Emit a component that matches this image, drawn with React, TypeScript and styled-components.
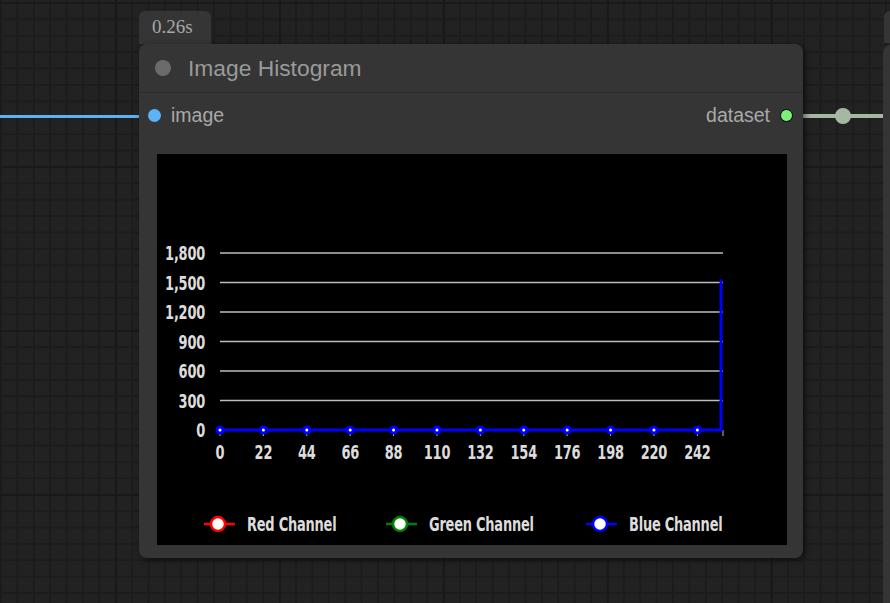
import React from 'react';
import styled, { createGlobalStyle } from 'styled-components';

const GlobalStyle = createGlobalStyle`
    html, body {
        margin: 0;
        padding: 0;
        background: #222;
        overflow: hidden;
    }
`

const yTicks = [0, 300, 600, 900, 1200, 1500, 1800];
const xTicks = [0, 22, 44, 66, 88, 110, 132, 154, 176, 198, 220, 242];

// chart geometry, in px inside the black preview box
const X0 = 63;
const X1 = 566;
const Y0 = 276;
const PER_UNIT_Y = 29.5 / 300;
const PER_UNIT_X = (X1 - X0) / 255;
const NARROW = 0.76;

const xPos = (v: number) => X0 + v * PER_UNIT_X;
const yPos = (v: number) => Y0 - v * PER_UNIT_Y;

const legend = [
    { label: 'Red Channel', color: '#ff0000', x: 47 },
    { label: 'Green Channel', color: '#008000', x: 229 },
    { label: 'Blue Channel', color: '#0000ff', x: 429 },
];

type LabelProps = {
    x: number;
    y: number;
    anchor?: 'start' | 'middle' | 'end';
    children: React.ReactNode;
}

// condensed label: the font is squeezed horizontally round its anchor
const Label: React.FunctionComponent<LabelProps> = ({ x, y, anchor = 'start', children }: LabelProps) => (
    <AxisText transform={`translate(${x} ${y}) scale(${NARROW} 1)`} textAnchor={anchor}>
        {children}
    </AxisText>
)

const Histogram: React.FunctionComponent = () => {
    const peakX = xPos(254);
    return (
        <ChartSvg width={630} height={391} viewBox='0 0 630 391'>
            {yTicks.map((t) => (
                <g key={t}>
                    {t > 0 && (
                        <line x1={X0} x2={X1} y1={yPos(t)} y2={yPos(t)} stroke='#bdbdbd' strokeWidth={1.5} />
                    )}
                    <Label x={48} y={yPos(t) + 7} anchor='end'>
                        {t.toLocaleString('en-US')}
                    </Label>
                </g>
            ))}
            {xTicks.map((t) => (
                <g key={t}>
                    <line x1={xPos(t)} x2={xPos(t)} y1={Y0} y2={Y0 + 6} stroke='#bdbdbd' strokeWidth={1} />
                    <Label x={xPos(t)} y={Y0 + 29} anchor='middle'>{t}</Label>
                </g>
            ))}
            <line x1={X1} x2={X1} y1={Y0} y2={Y0 + 6} stroke='#bdbdbd' strokeWidth={1} />
            <polyline
                points={`${X0},${Y0} ${peakX},${Y0} ${peakX},${yPos(1530)}`}
                fill='none'
                stroke='#0000ff'
                strokeWidth={3}
            />
            {xTicks.map((t) => (
                <g key={'p' + t}>
                    <circle cx={xPos(t)} cy={Y0} r={4.5} fill='#0000ff' />
                    <circle cx={xPos(t)} cy={Y0} r={1.5} fill='#ffffff' />
                </g>
            ))}
            {legend.map((l) => (
                <g key={l.label}>
                    <line x1={l.x} x2={l.x + 31} y1={370} y2={370} stroke={l.color} strokeWidth={2.5} />
                    <circle cx={l.x + 14} cy={370} r={7} fill='#ffffff' stroke={l.color} strokeWidth={2.5} />
                    <Label x={l.x + 43} y={377}>{l.label}</Label>
                </g>
            ))}
        </ChartSvg>
    )
}

const App: React.FunctionComponent = () => {
    return (
        <Canvas>
            <GlobalStyle />
            <Link $left={0} $width={140} $color='#5fb2f2' $thick={3} />
            <Link $left={803} $width={81} $color='#a6b8a4' $thick={4} />
            <LinkKnot />

            <NeighbourBadge />
            <NeighbourNode />

            <TimeBadge>0.26s</TimeBadge>
            <Node>
                <TitleBar>
                    <TitleDot />
                    <Title>Image Histogram</Title>
                </TitleBar>
                <SlotRow>
                    <Slot>
                        <SlotDot $color='#5cb3f7' />
                        <SlotLabel>image</SlotLabel>
                    </Slot>
                    <Slot>
                        <SlotLabel>dataset</SlotLabel>
                        <SlotDot $color='#7af07a' $outlined />
                    </Slot>
                </SlotRow>
                <Preview>
                    <Histogram />
                </Preview>
            </Node>
        </Canvas>
    )
}

const Canvas = styled.div`
    position: relative;
    width: 890px;
    height: 603px;
    overflow: hidden;
    background-color: #222;
    background-image:
        linear-gradient(to right, #191919 2px, transparent 2px),
        linear-gradient(to bottom, #191919 2px, transparent 2px),
        linear-gradient(to right, #1c1c1c 1.5px, transparent 1.5px),
        linear-gradient(to bottom, #1c1c1c 1.5px, transparent 1.5px);
    background-size: 164px 164px, 164px 164px, 16.4px 16.4px, 16.4px 16.4px;
    background-position: 115px 2px, 115px 2px, 0 2px, 0 2px;
    font-family: Arial, "Liberation Sans", sans-serif;
`

const Link = styled.div<{ $left: number; $width: number; $color: string; $thick: number }>`
    position: absolute;
    top: ${(p) => 116 - p.$thick / 2}px;
    left: ${(p) => p.$left}px;
    width: ${(p) => p.$width}px;
    height: ${(p) => p.$thick}px;
    background: ${(p) => p.$color};
`

const LinkKnot = styled.div`
    position: absolute;
    left: 835px;
    top: 108px;
    width: 16px;
    height: 16px;
    border-radius: 50%;
    background: #a6b8a4;
`

const NeighbourBadge = styled.div`
    position: absolute;
    left: 884px;
    top: 11px;
    width: 40px;
    height: 32px;
    border-radius: 6px 6px 0 0;
    background: #353535;
`

const NeighbourNode = styled.div`
    position: absolute;
    left: 883px;
    top: 45px;
    width: 40px;
    height: 600px;
    border-radius: 8px 0 0 0;
    background: #353535;
`

const TimeBadge = styled.div`
    position: absolute;
    left: 139px;
    top: 11px;
    width: 72px;
    height: 33px;
    box-sizing: border-box;
    padding: 5px 0 0 13px;
    border-radius: 6px 6px 0 0;
    background: #353535;
    color: #a8a8a8;
    font-family: "Liberation Serif", "Times New Roman", serif;
    font-size: 19px;
`

const Node = styled.div`
    position: absolute;
    left: 139px;
    top: 44px;
    width: 664px;
    height: 514px;
    display: flex;
    flex-direction: column;
    border-radius: 8px;
    background: #353535;
    box-shadow: 2px 2px 6px rgba(0, 0, 0, 0.55);
`

const TitleBar = styled.div`
    height: 49px;
    display: flex;
    align-items: center;
    gap: 17px;
    padding-left: 16px;
    border-bottom: 1px solid #2c2c2c;
    box-sizing: border-box;
`

const TitleDot = styled.div`
    width: 16px;
    height: 16px;
    border-radius: 50%;
    background: #6b6b6b;
`

const Title = styled.div`
    color: #9a9a9a;
    font-size: 22.8px;
    padding-top: 1px;
`

const SlotRow = styled.div`
    height: 45px;
    display: flex;
    justify-content: space-between;
    align-items: center;
    padding: 0 10px 2px 9px;
`

const Slot = styled.div`
    display: flex;
    align-items: center;
    gap: 10px;
`

const SlotDot = styled.div<{ $color: string; $outlined?: boolean }>`
    width: 13px;
    height: 13px;
    box-sizing: border-box;
    border-radius: 50%;
    background: ${(p) => p.$color};
    border: ${(p) => (p.$outlined ? '1px solid #000' : 'none')};
`

const SlotLabel = styled.div`
    color: #a9a9a9;
    font-size: 19.5px;
`

const Preview = styled.div`
    margin: 14px 0 0 18px;
    width: 630px;
    height: 391px;
    background: #000;
`

const ChartSvg = styled.svg`
    display: block;
`

const AxisText = styled.text`
    fill: #dcdcdc;
    font-family: "Liberation Sans Narrow", "DejaVu Sans Condensed", "Roboto", sans-serif;
    font-weight: 700;
    font-size: 19px;
    letter-spacing: -0.3px;
`

export default App;
